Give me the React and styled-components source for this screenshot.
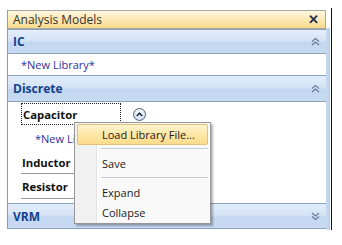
import React from 'react';
import styled, { createGlobalStyle } from 'styled-components';

const GlobalStyle = createGlobalStyle`
  html, body { margin: 0; padding: 0; background: #ffffff; }
  body { font-family: "Open Sans", "Noto Sans", sans-serif; font-size: 11px; }
`;

const Page = styled.div`
  position: relative;
  width: 342px;
  height: 245px;
  overflow: hidden;
  display: flex;
  align-items: flex-start;
  padding: 10px 0 0 7px;
  box-sizing: border-box;
`;

const Panel = styled.div`
  width: 318px;
  display: flex;
  flex-direction: column;
  border-left: 1px solid #8d9db5;
`;

const Edge = styled.div`
  margin-top: -2px;
  height: 222px;
  width: 4px;
  border-right: 1px solid #111;
  display: flex;
  flex-direction: column;
  padding-right: 1px;
`;

const EdgeFill = styled.div`
  margin-top: 20px;
  flex: 1;
  background: linear-gradient(90deg, #c9dbf2, #b8cde9);
`;

const TitleBar = styled.div`
  height: 17px;
  display: flex;
  align-items: center;
  justify-content: space-between;
  padding: 0 6px 0 5px;
  border: 1px solid #a8a8a0;
  border-left: none;
  background: linear-gradient(180deg, #fff7e0 0%, #fde9b3 50%, #f8da8e 100%);
  color: #333;
  font-size: 12px;
`;

const CloseBtn = styled.span`
  font-weight: 700;
  font-size: 13px;
  color: #1e2f4d;
  line-height: 1;
`;

const GroupHeader = styled.div`
  height: ${p => p.h || 25}px;
  display: flex;
  align-items: center;
  justify-content: space-between;
  padding: 0 6px 0 5px;
  box-sizing: border-box;
  border-top: 1px solid #8ea2be;
  border-bottom: 1px solid #8ea2be;
  background: linear-gradient(180deg, #e4eefb 0%, #d4e3f7 45%, #c3d7f1 55%, #c9dbf3 100%);
  color: #15428b;
  font-weight: 700;
  font-size: 12px;
`;

const Chevron = ({ down }) => (
  <svg width="9" height="9" viewBox="0 0 9 9">
    <g fill="none" stroke="#6b7c95" strokeWidth="1.2" transform={down ? 'rotate(180 4.5 4.5)' : undefined}>
      <path d="M1 4.5 L4.5 1.5 L8 4.5" />
      <path d="M1 8 L4.5 5 L8 8" />
    </g>
  </svg>
);

const Body = styled.div`
  background: #fff;
  display: flex;
  flex-direction: column;
  padding: ${p => p.pad || '0'};
`;

const LibRow = styled.div`
  height: ${p => p.h}px;
  display: flex;
  align-items: center;
  padding-left: ${p => p.indent}px;
  color: #2f2f9c;
`;

const ItemRow = styled.div`
  height: ${p => p.h}px;
  display: flex;
  align-items: center;
  gap: 12px;
  padding-left: 13px;
`;

const ItemLabel = styled.div`
  width: 100px;
  height: 100%;
  box-sizing: border-box;
  display: flex;
  align-items: center;
  padding-left: 1px;
  font-weight: 700;
  font-size: 11.3px;
  color: #111;
  border: ${p => (p.focus ? '1px dotted #222' : 'none')};
  border-bottom: ${p => (p.focus ? '1px dotted #222' : '1px solid #9a9a9a')};
`;

const RoundBtn = styled.div`
  width: 11px;
  height: 11px;
  border-radius: 50%;
  border: 1px solid #52627c;
  background: radial-gradient(circle at 50% 35%, #ffffff, #c4d3e8);
  display: flex;
  align-items: center;
  justify-content: center;
  margin-top: 1px;
`;

const Menu = styled.div`
  position: absolute;
  left: 74px;
  top: 122px;
  width: 137px;
  height: 102px;
  box-sizing: border-box;
  border: 1px solid #979797;
  background: linear-gradient(90deg, #f1f1f1 0, #f1f1f1 21px, #e2e3e3 21px, #e2e3e3 22px, #fff 22px, #fff 23px, #f9f9f9 23px);
  box-shadow: 2px 2px 2px rgba(0, 0, 0, 0.3);
  padding: 1px 2px;
  display: flex;
  flex-direction: column;
`;

const MenuItem = styled.div`
  height: ${p => p.h || 20}px;
  display: flex;
  align-items: center;
  padding-left: 24px;
  box-sizing: border-box;
  color: #1a1a1a;
  border: 1px solid ${p => (p.active ? '#e2c274' : 'transparent')};
  border-radius: 2px;
  background: ${p => (p.active ? 'linear-gradient(180deg, #fff4cf 0%, #fde6a6 50%, #fbdc8d 100%)' : 'transparent')};
`;

const Separator = styled.div`
  margin: ${p => p.m || '3px'} 0 ${p => p.m || '3px'} 24px;
  height: 1px;
  background: #c5cdd8;
  border-bottom: 1px solid #fff;
`;

export default function App() {
  return (
    <>
      <GlobalStyle />
      <Page>
        <Panel>
          <TitleBar>
            <span>Analysis Models</span>
            <CloseBtn>✕</CloseBtn>
          </TitleBar>
          <GroupHeader h={25}>
            <span>IC</span>
            <Chevron />
          </GroupHeader>
          <Body>
            <LibRow h={21} indent={13}>*New Library*</LibRow>
          </Body>
          <GroupHeader h={27}>
            <span>Discrete</span>
            <Chevron />
          </GroupHeader>
          <Body pad="1px 0 4px 0">
            <ItemRow h={22}>
              <ItemLabel focus>Capacitor</ItemLabel>
              <RoundBtn>
                <svg width="7" height="5" viewBox="0 0 7 5">
                  <path d="M0.8 4 L3.5 1.2 L6.2 4" fill="none" stroke="#1b2a44" strokeWidth="1.6" />
                </svg>
              </RoundBtn>
            </ItemRow>
            <LibRow h={26} indent={27}>*New Library*</LibRow>
            <ItemRow h={23}>
              <ItemLabel>Inductor</ItemLabel>
            </ItemRow>
            <ItemRow h={25}>
              <ItemLabel>Resistor</ItemLabel>
            </ItemRow>
          </Body>
          <GroupHeader h={26}>
            <span>VRM</span>
            <Chevron down />
          </GroupHeader>
        </Panel>
        <Edge>
          <EdgeFill />
        </Edge>
        <Menu>
          <MenuItem active h={22}>Load Library File...</MenuItem>
          <Separator />
          <MenuItem>Save</MenuItem>
          <Separator m="4px" />
          <MenuItem>Expand</MenuItem>
          <MenuItem>Collapse</MenuItem>
        </Menu>
      </Page>
    </>
  );
}
